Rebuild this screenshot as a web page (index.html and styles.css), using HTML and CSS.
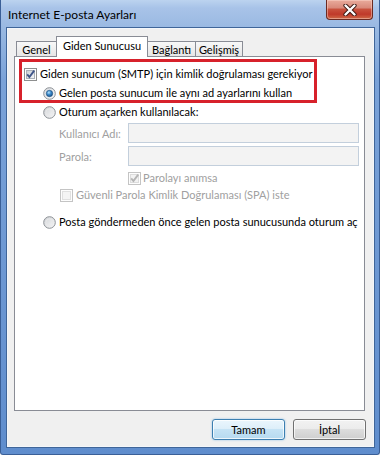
FILE: index.html
```html
<!DOCTYPE html>
<html lang="tr">
<head>
<meta charset="utf-8">
<title>Internet E-posta Ayarları</title>
<link rel="stylesheet" href="styles.css">
</head>
<body>
<div class="window">
  <div class="titlebar">
    <span class="title">Internet E-posta Ayarları</span>
    <div class="close">
      <svg width="14" height="12" viewBox="0 0 14 12">
        <path d="M2.5 1.5 L11.5 10.5 M11.5 1.5 L2.5 10.5" stroke="#3a1610" stroke-width="4.2" stroke-linecap="round" fill="none"/>
        <path d="M2.5 1.5 L11.5 10.5 M11.5 1.5 L2.5 10.5" stroke="#ffffff" stroke-width="2.4" stroke-linecap="round" fill="none"/>
      </svg>
    </div>
  </div>
  <div class="client">
    <div class="tabs">
      <div class="tab t-genel">Genel</div>
      <div class="tab active t-giden">Giden Sunucusu</div>
      <div class="tab t-baglanti">Bağlantı</div>
      <div class="tab t-gelismis">Gelişmiş</div>
    </div>
    <div class="panel">
      <div class="highlight">
        <div class="row r-auth">
          <svg class="box" width="13" height="13" viewBox="0 0 13 13">
            <defs><linearGradient id="g1" x1="0" y1="0" x2="1" y2="1"><stop offset="0" stop-color="#c9ced4"/><stop offset="1" stop-color="#f6f7f8"/></linearGradient></defs>
            <rect x="0.5" y="0.5" width="12" height="12" fill="#fdfdfd" stroke="#8e8f8f"/>
            <rect x="2.5" y="2.5" width="8" height="8" fill="url(#g1)" stroke="#aab0b8"/>
            <path d="M3.2 6.4 L5.4 9 L10.2 2.6" fill="none" stroke="#3f5589" stroke-width="1.9"/>
          </svg>
          <span>Giden sunucum (SMTP) için kimlik doğrulaması gerekiyor</span>
        </div>
        <div class="row r-same">
          <svg class="box" width="13" height="13" viewBox="0 0 13 13">
            <defs>
              <linearGradient id="g2" x1="0" y1="0" x2="1" y2="1"><stop offset="0" stop-color="#d6d9dd"/><stop offset="1" stop-color="#fbfbfb"/></linearGradient>
              <radialGradient id="g3" cx="0.4" cy="0.35" r="0.7"><stop offset="0" stop-color="#b8e6ff"/><stop offset="0.45" stop-color="#3e8ccc"/><stop offset="1" stop-color="#164f86"/></radialGradient>
            </defs>
            <circle cx="6.5" cy="6.5" r="5.8" fill="url(#g2)" stroke="#8b8f94"/>
            <circle cx="6.5" cy="6.5" r="3.2" fill="url(#g3)" stroke="#1d4e7c" stroke-width="0.6"/>
          </svg>
          <span>Gelen posta sunucum ile aynı ad ayarlarını kullan</span>
        </div>
      </div>
      <div class="row r-radio r-logon">
        <svg class="box" width="13" height="13" viewBox="0 0 13 13">
          <defs><linearGradient id="g4" x1="0" y1="0" x2="1" y2="1"><stop offset="0" stop-color="#cfd2d6"/><stop offset="1" stop-color="#fafafa"/></linearGradient></defs>
          <circle cx="6.5" cy="6.5" r="5.8" fill="url(#g4)" stroke="#8b8f94"/>
          <circle cx="6.5" cy="6.5" r="3.6" fill="none" stroke="#e8e9ea" stroke-width="0.8"/>
        </svg>
        <span>Oturum açarken kullanılacak:</span>
      </div>
      <div class="field f-user">
        <span class="label">Kullanıcı Adı:</span>
        <div class="input"></div>
      </div>
      <div class="field f-pass">
        <span class="label">Parola:</span>
        <div class="input"></div>
      </div>
      <div class="row r-remember disabled">
        <svg class="box" width="13" height="13" viewBox="0 0 13 13">
          <rect x="0.5" y="0.5" width="12" height="12" fill="#fdfdfd" stroke="#c4c4c4"/>
          <rect x="2.5" y="2.5" width="8" height="8" fill="#f2f2f2" stroke="#dcdcdc"/>
          <path d="M3.2 6.4 L5.4 9 L10.2 2.6" fill="none" stroke="#b4b4b4" stroke-width="1.9"/>
        </svg>
        <span>Parolayı anımsa</span>
      </div>
      <div class="row r-spa disabled">
        <svg class="box" width="13" height="13" viewBox="0 0 13 13">
          <rect x="0.5" y="0.5" width="12" height="12" fill="#fdfdfd" stroke="#c4c4c4"/>
          <rect x="2.5" y="2.5" width="8" height="8" fill="#f4f4f4" stroke="#e0e0e0"/>
        </svg>
        <span>Güvenli Parola Kimlik Doğrulaması (SPA) iste</span>
      </div>
      <div class="row r-radio r-before">
        <svg class="box" width="13" height="13" viewBox="0 0 13 13">
          <defs><linearGradient id="g5" x1="0" y1="0" x2="1" y2="1"><stop offset="0" stop-color="#cfd2d6"/><stop offset="1" stop-color="#fafafa"/></linearGradient></defs>
          <circle cx="6.5" cy="6.5" r="5.8" fill="url(#g5)" stroke="#8b8f94"/>
          <circle cx="6.5" cy="6.5" r="3.6" fill="none" stroke="#e8e9ea" stroke-width="0.8"/>
        </svg>
        <span>Posta göndermeden önce gelen posta sunucusunda oturum aç</span>
      </div>
    </div>
    <div class="buttons">
      <button class="btn btn-default">Tamam</button>
      <button class="btn">İptal</button>
    </div>
  </div>
</div>
</body>
</html>
```
FILE: styles.css
```css
html, body {
  margin: 0;
  padding: 0;
}
body {
  width: 380px;
  height: 455px;
  overflow: hidden;
  font-family: "Lato", "Noto Sans", sans-serif;
  font-size: 11px;
  color: #000;
}
.window {
  box-sizing: border-box;
  width: 380px;
  height: 455px;
  padding: 0 5px 7px 6px;
  border: 1px solid #3a5f97;
  border-top: none;
  border-radius: 0 0 3px 3px;
  background: linear-gradient(to bottom, #bcd3ef 0, #a8c3e8 8px, #99b9e2 28px, #7aa2d8 80px, #5f8dcd 100%);
  display: flex;
  flex-direction: column;
}
.titlebar {
  height: 28px;
  flex: none;
  display: flex;
  align-items: flex-start;
  justify-content: space-between;
}
.title {
  padding: 7px 0 0 1px;
  line-height: 16px;
  font-size: 12px;
  color: #000;
}
.close {
  box-sizing: border-box;
  width: 47px;
  height: 20px;
  margin-right: 1px;
  border: 1px solid #6b2a22;
  border-top: none;
  border-radius: 0 0 4px 4px;
  background: linear-gradient(to bottom, #e9ab9c 0, #d98a7b 40%, #c8503c 50%, #c0392a 75%, #cf6a47 100%);
  box-shadow: inset 0 0 0 1px rgba(255, 220, 210, 0.45);
  display: flex;
  align-items: center;
  justify-content: center;
}
.client {
  flex: 1;
  border: 1px solid #f3f6fa;
  outline: 1px solid #3f6599;
  background: #f0f0f0;
  display: flex;
  flex-direction: column;
  padding-top: 7px;
}
.tabs {
  display: flex;
  align-items: flex-end;
  height: 20px;
  margin-left: 8px;
  position: relative;
  z-index: 1;
}
.tab {
  box-sizing: border-box;
  height: 15px;
  border: 1px solid #898c95;
  border-bottom: none;
  background: linear-gradient(to bottom, #f8f8f8, #e6e6e6);
  text-align: center;
  line-height: 15px;
  white-space: nowrap;
  margin-left: -1px;
}
.t-genel { width: 41px; margin-left: 0; }
.t-giden { width: 92px; }
.t-baglanti { width: 49px; }
.t-gelismis { width: 48px; }
.tab.active {
  height: 21px;
  margin-bottom: -1px;
  background: #fff;
  line-height: 18px;
  position: relative;
  z-index: 2;
}
.panel {
  box-sizing: border-box;
  margin-left: 6px;
  width: 351px;
  height: 355px;
  border: 1px solid #898c95;
  background: #fff;
  display: flex;
  flex-direction: column;
}
.highlight {
  box-sizing: border-box;
  width: 298px;
  height: 44px;
  margin: 2px 0 0 4px;
  border: 3px solid #d7212b;
  padding-top: 4px;
  display: flex;
  flex-direction: column;
}
.row {
  display: flex;
  align-items: center;
  height: 14px;
  line-height: 14px;
  white-space: nowrap;
}
.row .box {
  flex: none;
  margin-right: 3px;
}
.r-auth { height: 16px; padding-left: 2px; }
.r-same { margin-top: 4px; padding-left: 21px; }
.r-radio { padding-left: 28px; }
.r-logon { margin-top: 2px; }
.field {
  display: flex;
  align-items: center;
  height: 20px;
  padding-left: 44px;
}
.f-user { margin-top: 4px; }
.f-pass { margin-top: 3px; }
.label {
  flex: none;
  width: 69px;
  white-space: nowrap;
  color: #a0a0a0;
}
.input {
  box-sizing: border-box;
  width: 231px;
  height: 20px;
  border: 1px solid #c3cfdc;
  background: #f3f3f3;
}
.disabled { color: #a0a0a0; }
.r-remember { margin-top: 5px; padding-left: 113px; }
.r-remember .box { margin-right: 2px; }
.r-spa { margin-top: 3px; padding-left: 45px; }
.r-before { margin-top: 13px; }
.buttons {
  display: flex;
  justify-content: flex-end;
  gap: 8px;
  margin-top: 8px;
  padding-right: 7px;
}
.btn {
  box-sizing: border-box;
  width: 73px;
  height: 21px;
  padding: 0;
  font-family: inherit;
  font-size: 11px;
  color: #000;
  border: 1px solid #707070;
  border-radius: 3px;
  background: linear-gradient(to bottom, #f2f2f2 0, #ebebeb 50%, #dddddd 50%, #cfcfcf 100%);
  box-shadow: inset 0 0 0 1px rgba(255, 255, 255, 0.7);
}
.btn-default {
  border-color: #3c7fb1;
  background: linear-gradient(to bottom, #eaf6fd 0, #dceef9 50%, #c5e3f5 50%, #b6daf0 100%);
  box-shadow: inset 0 0 0 1px rgba(255, 255, 255, 0.75), 0 0 2px rgba(60, 150, 220, 0.6);
}
```
